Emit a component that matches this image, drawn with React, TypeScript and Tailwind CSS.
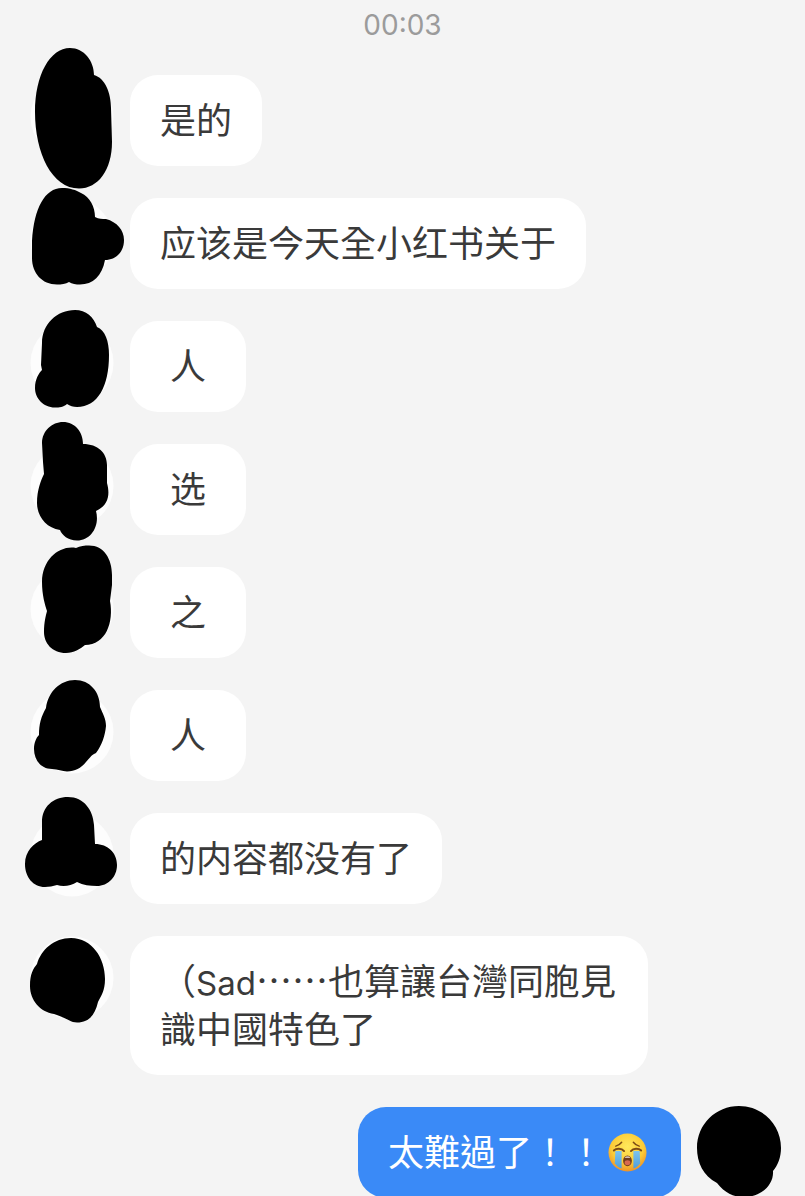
import React from "react"

interface Message {
    text: React.ReactNode
    blob: string
    mine?: boolean
}

const CryingEmoji: React.FC = () => {
    return (
        <svg viewBox="0 0 40 40" role="img" aria-label="😭" className="mx-1 inline-block h-[39px] w-[39px] align-[-6px]">
            <defs>
                <radialGradient id="face" cx="0.5" cy="0.35" r="0.65">
                    <stop offset="0" stopColor="#ffe95c" />
                    <stop offset="0.65" stopColor="#fccb37" />
                    <stop offset="1" stopColor="#ee9127" />
                </radialGradient>
                <linearGradient id="tear" x1="0" y1="0" x2="0" y2="1">
                    <stop offset="0" stopColor="#7cc3ee" />
                    <stop offset="1" stopColor="#4f9edb" />
                </linearGradient>
            </defs>
            <circle cx="20" cy="20" r="19.5" fill="url(#face)" />
            <path d="M7.5 18.5H14V36.5C11 35.5 8.5 33.5 7 31Z" fill="url(#tear)" />
            <path d="M26 18.5H32.5L33 31C31.5 33.5 29 35.5 26 36.5Z" fill="url(#tear)" />
            <g fill="none" stroke="#7a4a16" strokeLinecap="round">
                <path d="M8 13.5C10 13 12.5 11.5 14 9.5" strokeWidth="1.5" />
                <path d="M32 13.5C30 13 27.5 11.5 26 9.5" strokeWidth="1.5" />
                <path d="M6 18C8.5 15.5 14 15.5 16.5 18.5" strokeWidth="2" />
                <path d="M23.5 18.5C26 15.5 31.5 15.5 34 18" strokeWidth="2" />
            </g>
            <ellipse cx="20" cy="28.5" rx="4.5" ry="5.5" fill="#713c1c" />
            <ellipse cx="20" cy="30.5" rx="3" ry="2.5" fill="#d9684e" />
            <path d="M17 25.5C18 23.5 22 23.5 23 25.5Z" fill="#f5eee6" />
        </svg>
    )
}

const messages: Message[] = [
    {
        text: "是的",
        blob: "M40 -27C54 -27 64 -14 64 0C75 3 81 18 81 33L82 67C82 95 68 113.5 49 113.5C22 113.5 5 78 5 37C5 0 20 -27 40 -27Z",
    },
    {
        text: "应该是今天全小红书关于",
        blob: "M32 -10C40 -10 46 -8 51 -5C60 -1 65 9 65 19C69 21 72 21 76 21C87 24 94 32 94 42C94 54 86 62 75 62C72 78 63 86.5 50 86.5C46 86.5 42 86 39 84C36 86 31 86.5 27 86.5C12 86.5 2 75 2 60L2 43C4 10 15 -10 32 -10Z",
    },
    {
        text: "人",
        blob: "M45 -11C56 -11 64 -4 67 6C75 9 79 20 79 34C79 65 68 86 47 86C43 86 40 85 37 83C34 86 29 86.5 25 86.5C13 86.5 5 77 5 67C5 58 9 52 12 49L11 44L12 22C12 3 27 -11 45 -11Z",
    },
    {
        text: "选",
        blob: "M33 -22C45 -22 53 -12 53 0C68 0 77 9 77 21L77 39C80 50 79 61 66 67C70 82 61 96.5 47 96.5C38 96.5 32 91 30 86C16 84 7 72 7 59C7 46 11 36 14 30L13 18L12 -1C12 -13 22 -22 33 -22Z",
    },
    {
        text: "之",
        blob: "M46 -19C50 -21 55 -21.5 59 -21.5C74 -21.5 82 -8 82 8L82 18L80 34C84 55 76 78 55 78C50 82 44 86 36 86C22 86 14 76 14 65C14 55 16 48 17 44C15 38 12 28 12 15C12 -8 30 -22 46 -19Z",
    },
    {
        text: "人",
        blob: "M45 -10C60 -10 70 2 70 17C73 24 76 29 76 36C75 46 72 55 66 63C60 66 60 68 56 72C51 78 45 81.5 37 81.5C32 81.5 28 79 22 79C11 79 4 70 4 59C4 53 6 48 9 45C9 34 11 27 16 18C18 2 30 -10 45 -10Z",
    },
    {
        text: "的内容都没有了",
        blob: "M38 -16C54 -16 63 -3 64 12L65 31C78 31 87 40 87 52C87 64 78 73 67 73C60 73 53 72 47 69C41 73 33 74 27 72C23 73 19 74 15 74C3 74 -5 64 -5 51C-5 38 4 30 12 27L12 9C12 -6 23 -16 38 -16Z",
    },
    {
        text: <>（<span className="font-[Inter] text-[33px] leading-none">Sad</span>……也算讓台灣同胞見識中國特色了</>,
        blob: "M41 2C62 2 75 22 75 43C75 55 71 60 68 66C65 79 59 86.5 47 86.5C40 86.5 35 81 24 78C10 76 0 64 0 50C0 38 3 33 7 28C11 14 24 2 41 2Z",
    },
    {
        text: <>太難過了！！<CryingEmoji /></>,
        blob: "M42 -1C65 -1 84 17 84 41C84 50 81 58 76 64C77 78 64 90 47 90C36 90 28 86 20 76C6 69 0 55 0 41C0 17 19 -1 42 -1Z",
        mine: true,
    },
]

const Avatar: React.FC<{ blob: string, mine?: boolean }> = ({ blob, mine }) => {
    return (
        <svg viewBox="0 0 84 84" aria-hidden="true" className="h-[84px] w-[84px] shrink-0 overflow-visible">
            {!mine && <circle cx="42" cy="42" r="41.5" fill="#fdfdfd" />}
            <path d={blob} fill="#000" />
        </svg>
    )
}

const ChatMessage: React.FC<Message> = ({ text, blob, mine }) => {
    return (
        <li className={`flex items-start gap-4 ${mine ? "flex-row-reverse" : ""}`}>
            <Avatar blob={blob} mine={mine} />
            <div className={`flex min-w-[116px] max-w-[518px] justify-center rounded-[28px] px-[30px] pt-[19px] pb-6 text-[36px] leading-[48px] ${mine ? "bg-[#3a8af7] text-white" : "bg-white text-[#3a3a3a]"}`}>
                <p>{text}</p>
            </div>
        </li>
    )
}

const App: React.FC = () => {
    return (
        <main
            lang="zh-Hant"
            className="h-screen overflow-x-hidden overflow-y-auto bg-[#f4f4f4] font-['Noto_Sans_CJK_TC',sans-serif] [scrollbar-width:none]"
        >
            <time className="block pt-2.5 pb-[35px] text-center font-[Inter] text-[28px] leading-[30px] text-[#9b9b9b]">00:03</time>
            <ul className="flex flex-col gap-8 pr-6 pl-[30px]">
                {messages.map((m, i) => (
                    <ChatMessage key={i} {...m} />
                ))}
            </ul>
        </main>
    )
}

export default App
